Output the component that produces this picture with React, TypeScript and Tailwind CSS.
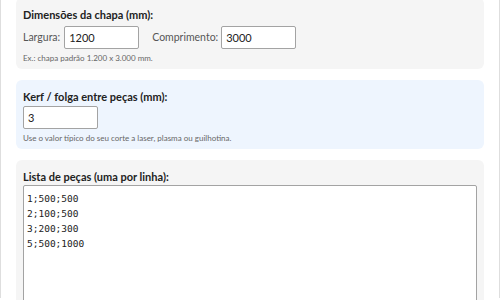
export default function App() {
  return (
    <div className="h-[300px] w-[500px] overflow-hidden bg-white font-['Lato',sans-serif]">
      <div className="mx-0 h-full border-x border-[#dedede] px-[15px]">
        <div className="-mt-[2px] flex flex-col gap-[11px]">
          {/* Dimensões da chapa */}
          <section className="rounded-[6px] bg-[#f5f5f5] px-[7px] pt-[10px] pb-[5px]">
            <h3 className="text-[11px] leading-[14px] font-bold text-[#222]">
              Dimensões da chapa (mm):
            </h3>
            <div className="mt-[4px] flex items-center text-[10.5px] text-[#555]">
              <label className="mr-[4px]">Largura:</label>
              <input
                defaultValue="1200"
                className="h-[23px] w-[75px] rounded-[2px] border border-[#a3a3a3] bg-white px-[4px] text-[11px] text-[#222] outline-none"
              />
              <label className="mr-[3px] ml-[13px]">Comprimento:</label>
              <input
                defaultValue="3000"
                className="h-[23px] w-[75px] rounded-[2px] border border-[#a3a3a3] bg-white px-[4px] text-[11px] text-[#222] outline-none"
              />
            </div>
            <p className="mt-[3px] text-[8px] leading-[12px] text-[#666]">
              Ex.: chapa padrão 1.200 x 3.000 mm.
            </p>
          </section>

          {/* Kerf */}
          <section className="rounded-[6px] bg-[#eef5fe] px-[7px] pt-[10px] pb-[5px]">
            <h3 className="text-[11px] leading-[14px] font-bold text-[#222]">
              Kerf / folga entre peças (mm):
            </h3>
            <input
              defaultValue="3"
              className="mt-[2px] block h-[23px] w-[75px] rounded-[2px] border border-[#a3a3a3] bg-white px-[4px] text-[11px] text-[#222] outline-none"
            />
            <p className="mt-[3px] text-[8px] leading-[12px] text-[#666]">
              Use o valor típico do seu corte a laser, plasma ou guilhotina.
            </p>
          </section>

          {/* Lista de peças */}
          <section className="rounded-[6px] bg-[#f5f5f5] px-[7px] pt-[10px] pb-[8px]">
            <h3 className="text-[11px] leading-[14px] font-bold text-[#222]">
              Lista de peças (uma por linha):
            </h3>
            <textarea
              defaultValue={"1;500;500\n2;100;500\n3;200;300\n5;500;1000"}
              className="mt-[1px] block h-[160px] w-full resize-none rounded-[2px] border border-[#a3a3a3] bg-white px-[3px] pt-[5px] font-['DejaVu_Sans_Mono',monospace] text-[9.5px] leading-[15px] text-[#222] outline-none"
            />
          </section>
        </div>
      </div>
    </div>
  );
}
